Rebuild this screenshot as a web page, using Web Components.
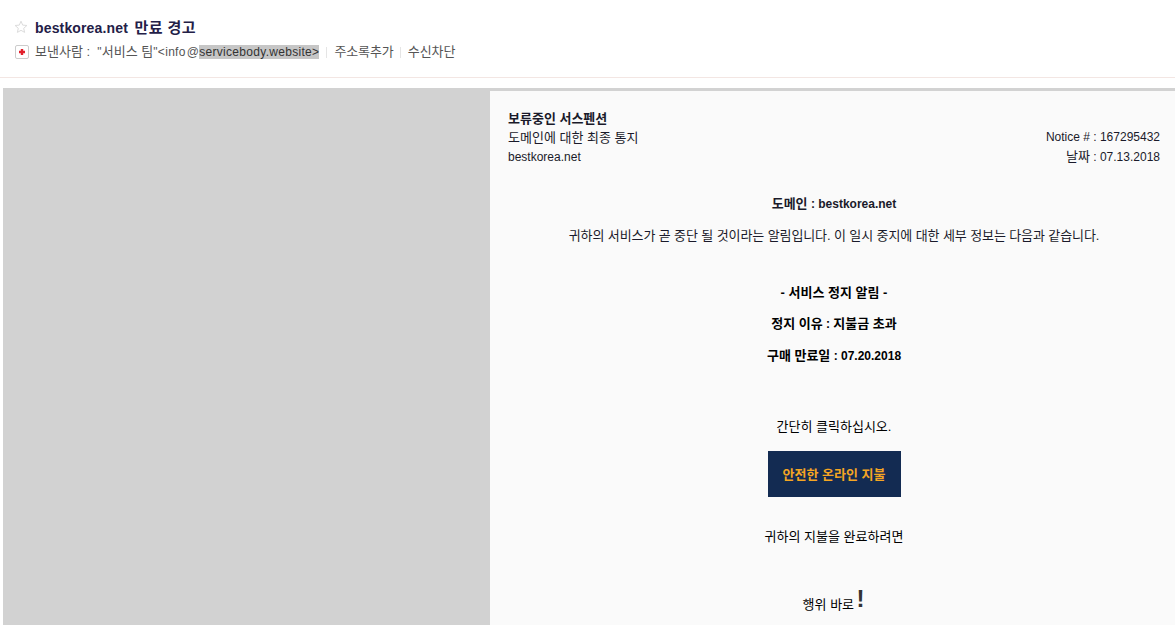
<!DOCTYPE html>
<html lang="ko"><head><meta charset="utf-8"><title>bestkorea.net 만료 경고</title>
<style>
html,body{margin:0;padding:0;height:625px;overflow:hidden;background:#fff;font-family:"Liberation Sans","Noto Sans CJK KR",sans-serif}
</style></head><body>
<mail-view></mail-view>
<script>
class MailHeader extends HTMLElement{constructor(){super();this.attachShadow({mode:'open'}).innerHTML=`<style>
:host{display:block;height:77px;border-bottom:1px solid #f3e6e3;padding:0 0 0 15px;color:#555;font-size:13px}
.t{display:flex;align-items:center;height:20px;padding-top:16px;gap:7px;font-size:15px;font-weight:700;color:#232047;letter-spacing:.4px}
.t svg{margin-left:-1px;position:relative;top:1px}
.t .l{font-size:14px;letter-spacing:.15px;margin-right:2px}
.s{display:flex;align-items:center;height:18px;margin-top:7px;white-space:nowrap}
.flag{width:12px;height:12px;border:1px solid #ccc;border-radius:2px;margin-right:6px;display:flex;flex:none}
.sel{background:#c6c6c6;color:#333}
.sep{width:1px;height:11px;background:#e5e5e5;margin:0 7px}
.sep.b{margin-left:6px}
.l2{font-size:12px;letter-spacing:.3px}
.l2 .at{margin-left:1px}
.tx{line-height:18px}
.n{letter-spacing:-.1px}
svg{display:block}
</style>
<div class="t"><svg width="14" height="14" viewBox="0 0 14 14"><path d="M7 1.200l1.700 3.900 4.200.4-3.200 2.800.9 4.100L7 10.300l-3.600 2.100.9-4.100L1.100 5.500l4.200-.4z" fill="none" stroke="#dcdcdc"/></svg><span><span class="l">bestkorea.net</span> 만료 경고</span></div>
<div class="s"><span class="flag"><svg width="12" height="12" viewBox="0 0 12 12"><path d="M6 3v6M3 6h6" stroke="#e2202c" stroke-width="2.400"/></svg></span><span class="tx">보낸사람 :&nbsp; <span class="l2">"</span>서비스 팀<span class="l2">"&lt;info<span class="at">@</span><span class="sel">servicebody.website&gt;</span></span></span><span class="sep"></span><span class="tx n">주소록추가</span><span class="sep b"></span><span class="tx">수신차단</span></div>`}}
customElements.define('mail-header',MailHeader);

class NoticeBody extends HTMLElement{constructor(){super();this.attachShadow({mode:'open'}).innerHTML=`<style>
:host{display:block;flex:1;background:#fafafa;color:#1a1a2a;font-size:12px;padding:18px 15px 0 18px;overflow:hidden;min-width:0}
.top{display:flex;justify-content:space-between;align-items:flex-start}
.top>div:first-child>div{height:19px;line-height:19px}
.top>div:first-child>div:first-child{line-height:20px}
.top>div:first-child>div:last-child{height:20px;line-height:21px}
.r{text-align:right;line-height:20px;padding-top:18px}
.c{text-align:center;line-height:18px}
.k{font-size:13px}
b{font-weight:700}
.btn{display:inline-flex;align-items:center;justify-content:center;box-sizing:border-box;width:133px;height:46px;padding-top:2px;background:#132b52;color:#f5a623;font-weight:700;font-size:13px}
.ex{font-size:24px;font-weight:700;line-height:18px;color:#333;position:relative;top:-2px;left:-1px}
p{margin:0}
.blk{color:#000}
.tight{letter-spacing:-.1px}
</style>
<div class="top"><div><div class="k"><b>보류중인 서스펜션</b></div><div class="k">도메인에 대한 최종 통지</div><div>bestkorea.net</div></div><div class="r">Notice # : 167295432<br><span class="k">날짜</span> : 07.13.2018</div></div>
<div class="c">
<p style="margin-top:28px"><b><span class="k">도메인</span> : bestkorea.net</b></p>
<p class="k tight" style="margin-top:14px">귀하의 서비스가 곧 중단 될 것이라는 알림입니다. 이 일시 중지에 대한 세부 정보는 다음과 같습니다.</p>
<p class="blk" style="margin-top:39px"><b><span class="k">- 서비스 정지 알림 -</span></b></p>
<p class="blk" style="margin-top:13px"><b><span class="k">정지 이유</span> : <span class="k">지불금 초과</span></b></p>
<p class="blk" style="margin-top:14px"><b><span class="k">구매 만료일</span> : 07.20.2018</b></p>
<p class="k blk" style="margin-top:53px">간단히 클릭하십시오.</p>
<div style="margin-top:15px;height:46px"><span class="btn">안전한 온라인 지불</span></div>
<p class="k blk" style="margin-top:31px">귀하의 지불을 완료하려면</p>
<p style="margin-top:46px"><span class="k blk">행위 바로</span> <span class="ex">!</span></p>
</div>`}}
customElements.define('notice-body',NoticeBody);

class MailView extends HTMLElement{constructor(){super();this.attachShadow({mode:'open'}).innerHTML=`<style>
:host{display:block;height:625px;overflow:hidden}
.wrap{margin:10px 0 0 3px;border-top:3px solid #d2d2d2;display:flex;height:537px}
.left{width:487px;background:#d2d2d2;flex:none}
</style>
<mail-header></mail-header>
<div class="wrap"><div class="left"></div><notice-body></notice-body></div>`}}
customElements.define('mail-view',MailView);
</script></body></html>
